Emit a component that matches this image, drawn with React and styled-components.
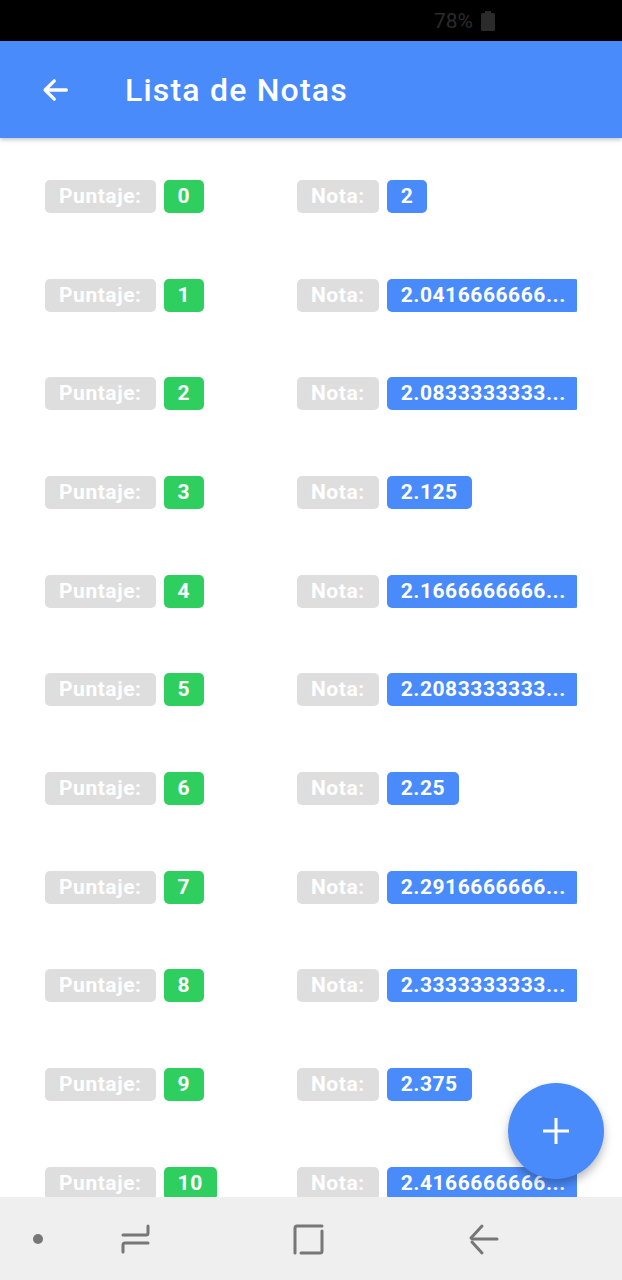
import React from "react";
import styled, { createGlobalStyle } from "styled-components";

const GlobalStyle = createGlobalStyle`
  html, body {
    margin: 0;
    padding: 0;
    background: #ffffff;
  }
  body {
    font-family: Roboto, "Noto Sans", sans-serif;
  }
`;

const Screen = styled.div`
  width: 622px;
  height: 1280px;
  display: flex;
  flex-direction: column;
  overflow: hidden;
  position: relative;
  background: #ffffff;
`;

const StatusBar = styled.div`
  height: 41px;
  flex-shrink: 0;
  background: #000000;
  display: flex;
  align-items: center;
  justify-content: flex-end;
  padding-right: 127px;
  gap: 8px;
  color: #2b2b2b;
  font-size: 21px;
  letter-spacing: 0;
`;

const AppBar = styled.header`
  height: 97px;
  flex-shrink: 0;
  background: #4a8bfb;
  display: flex;
  align-items: center;
  padding-left: 38px;
  box-shadow: 0 2px 4px rgba(0, 0, 0, 0.22);
  position: relative;
  z-index: 2;
`;

const Title = styled.h1`
  margin: 0 0 0 53px;
  color: #ffffff;
  font-size: 32px;
  font-weight: 500;
  letter-spacing: 1.2px;
`;

const Content = styled.main`
  flex: 1;
  overflow: hidden;
  padding: 42px 0 0 45px;
  display: flex;
  flex-direction: column;
  gap: 65.67px;
`;

const Row = styled.div`
  display: flex;
  align-items: center;
  height: 33px;
  flex-shrink: 0;
`;

const Group = styled.div`
  display: flex;
  align-items: center;
  gap: 8px;
  width: ${(p) => p.$width}px;
  overflow: hidden;
`;

const Chip = styled.span`
  height: 33px;
  line-height: 33px;
  padding: 0 14px;
  border-radius: 5px;
  background: ${(p) => p.$bg};
  color: #ffffff;
  font-size: 21px;
  font-weight: 700;
  letter-spacing: 0.55px;
  white-space: nowrap;
  flex-shrink: 0;
`;

const NavBar = styled.nav`
  height: 83px;
  flex-shrink: 0;
  background: #efefef;
  display: grid;
  grid-template-columns: 76px 120px 226px 124px 1fr;
  align-items: center;
`;

const NavSlot = styled.div`
  display: flex;
  justify-content: center;
  align-items: center;
`;

const Dot = styled.span`
  width: 10px;
  height: 10px;
  border-radius: 50%;
  background: #777777;
`;

const Fab = styled.button`
  position: absolute;
  left: 508px;
  top: 1083px;
  width: 96px;
  height: 96px;
  border-radius: 50%;
  border: none;
  background: #4a8bfb;
  box-shadow: 0 5px 10px rgba(0, 0, 0, 0.28);
  display: flex;
  align-items: center;
  justify-content: center;
  padding: 0;
  z-index: 3;
`;

const formatNota = (n) => {
  const s = String(n);
  return s.length > 12 ? s.slice(0, 12) + "..." : s;
};

const rows = Array.from({ length: 11 }, (_, i) => ({
  puntaje: i,
  nota: 2 + i / 24,
}));

const Battery = () => (
  <svg width="14" height="20" viewBox="0 0 14 20">
    <rect x="4" y="0" width="6" height="3" fill="#2b2b2b" />
    <rect x="0" y="2" width="14" height="18" rx="1.5" fill="#2b2b2b" />
  </svg>
);

const NavIcon = ({ children }) => (
  <svg
    width="34"
    height="34"
    viewBox="0 0 34 34"
    fill="none"
    stroke="#777777"
    strokeWidth="3"
    strokeLinecap="round"
    strokeLinejoin="round"
  >
    {children}
  </svg>
);

export default function App() {
  return (
    <Screen>
      <GlobalStyle />
      <StatusBar>
        <span>78%</span>
        <Battery />
      </StatusBar>
      <AppBar>
        <svg width="34" height="34" viewBox="0 0 24 24" fill="none" stroke="#fff" strokeWidth="2.3" strokeLinecap="round" strokeLinejoin="round">
          <path d="M20 12H5M11.5 5.5 5 12l6.5 6.5" />
        </svg>
        <Title>Lista de Notas</Title>
      </AppBar>
      <Content>
        {rows.map((r) => (
          <Row key={r.puntaje}>
            <Group $width={252}>
              <Chip $bg="#dedede">Puntaje:</Chip>
              <Chip $bg="#2fcf5f">{r.puntaje}</Chip>
            </Group>
            <Group $width={280}>
              <Chip $bg="#dedede">Nota:</Chip>
              <Chip $bg="#4a8bfb">{formatNota(r.nota)}</Chip>
            </Group>
          </Row>
        ))}
      </Content>
      <Fab aria-label="Agregar">
        <svg width="30" height="30" viewBox="0 0 30 30" stroke="#fff" strokeWidth="3">
          <path d="M15 2v26M2 15h26" />
        </svg>
      </Fab>
      <NavBar>
        <NavSlot>
          <Dot />
        </NavSlot>
        <NavSlot>
          <NavIcon>
            <path d="M29 4v7q0 2-2 2H4" />
            <path d="M29 21H6q-2 0-2 2v7" />
          </NavIcon>
        </NavSlot>
        <NavSlot>
          <NavIcon>
            <path d="M3 31V6q0-2 2-2h25" />
            <path d="M30 9v20q0 2-2 2H9" />
          </NavIcon>
        </NavSlot>
        <NavSlot>
          <NavIcon>
            <path d="M30 17H5" />
            <path d="M15 4 4 16" />
            <path d="M5 20l10 11" />
          </NavIcon>
        </NavSlot>
        <NavSlot />
      </NavBar>
    </Screen>
  );
}
